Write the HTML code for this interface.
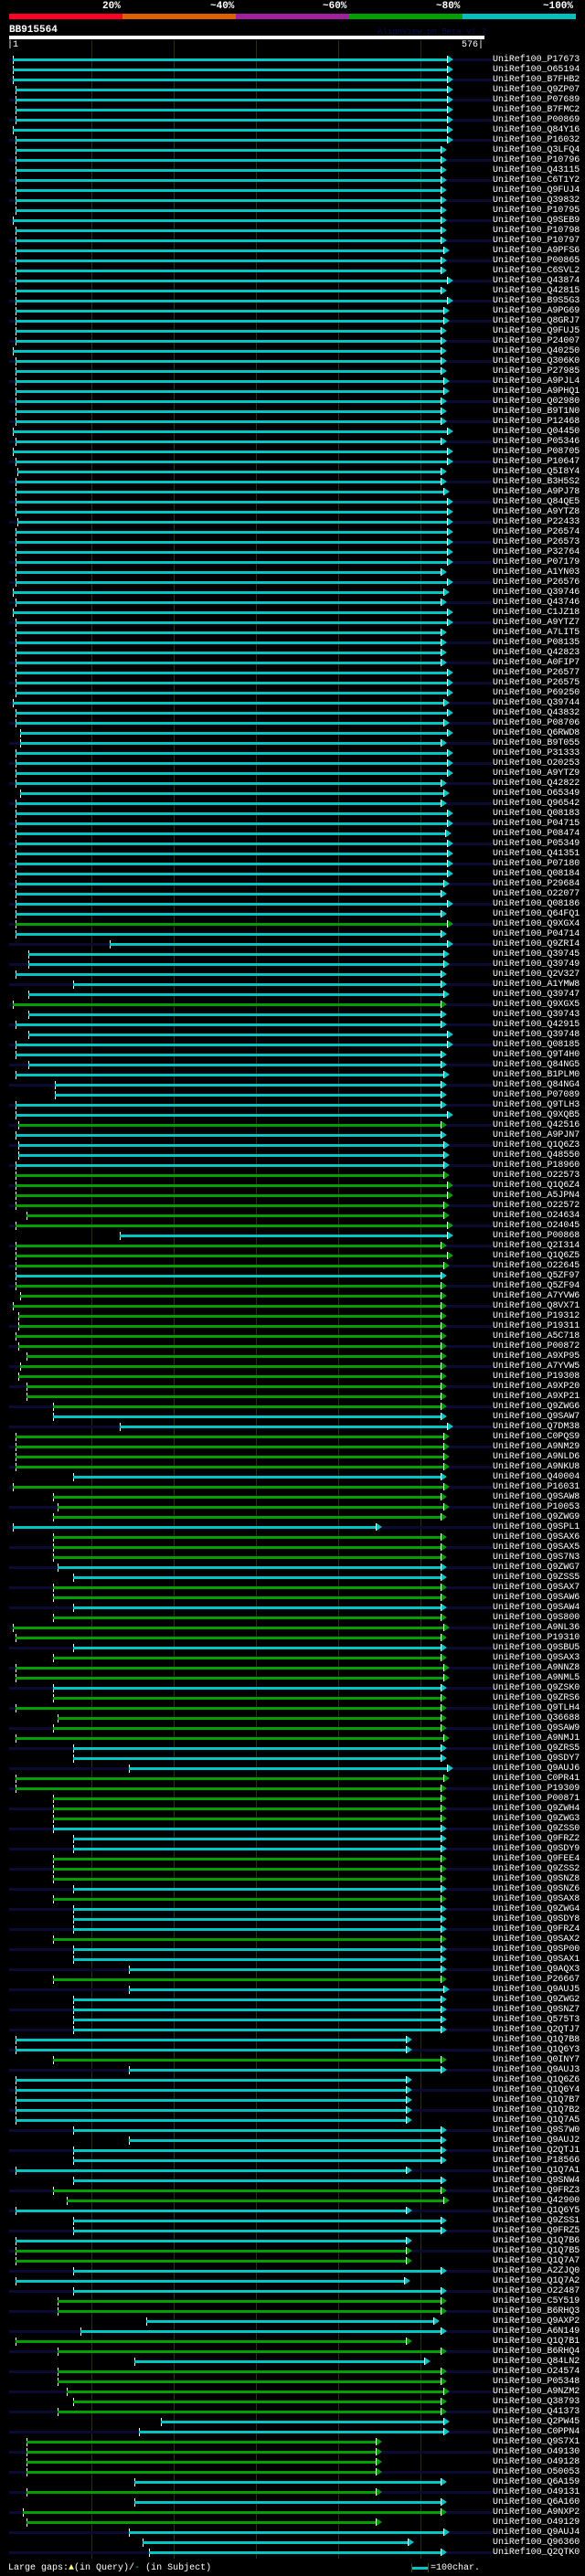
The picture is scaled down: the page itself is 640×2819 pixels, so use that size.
<!DOCTYPE html>
<html><head><meta charset="utf-8"><style>
*{margin:0;padding:0;box-sizing:border-box}
html,body{width:640px;height:2819px;background:#000;overflow:hidden}
body{position:relative;font-family:"Liberation Mono",monospace;color:#fff}
.a{position:absolute}
.pct{top:1px;font:bold 11px/12px "Liberation Mono",monospace}
.grid{position:absolute;top:44px;width:1px;height:2756px;background:#2e2e0c}
.r{position:absolute;left:0;width:640px;height:11px;top:calc(60px + var(--i)*11px);
 --nv:transparent;
 background:linear-gradient(#fff,#fff) no-repeat var(--s) 1px/1px 9px,linear-gradient(var(--nv),var(--nv)) no-repeat 10px 4px/530px 3px}
.r:nth-child(even){}
.n{--nv:#0a0a33}
.c{--c:#00c6c6}.g{--c:#00a000}
.r::before{content:"";position:absolute;left:var(--s);top:4px;height:3px;width:calc(var(--e) - var(--s));background:var(--c)}
.r::after{content:"";position:absolute;left:var(--e);top:1px;width:0;height:0;border-left:6px solid var(--c);border-top:4.5px solid transparent;border-bottom:4.5px solid transparent;box-shadow:-1px 0 0 #fff}
.r b{position:absolute;left:539px;top:0;font:normal 10px/11px "Liberation Mono",monospace;color:#fff;letter-spacing:-0.05px}
</style></head><body>
<div class="a pct" style="left:112px">20%</div>
<div class="a pct" style="left:230px">~40%</div>
<div class="a pct" style="left:353px">~60%</div>
<div class="a pct" style="left:477px">~80%</div>
<div class="a pct" style="left:594px">~100%</div>
<div class="a" style="left:10px;top:15px;width:124px;height:6px;background:#ff0022"></div>
<div class="a" style="left:134px;top:15px;width:124px;height:6px;background:#e06000"></div>
<div class="a" style="left:258px;top:15px;width:124px;height:6px;background:#a020a0"></div>
<div class="a" style="left:382px;top:15px;width:124px;height:6px;background:#00a000"></div>
<div class="a" style="left:506px;top:15px;width:124px;height:6px;background:#00c0c0"></div>
<div class="a" style="left:10px;top:27px;font:bold 11px/12px 'Liberation Mono',monospace">BB915564</div>
<div class="a" style="left:413px;top:31px;font:9px/9px 'Liberation Mono',monospace;color:#0c0c50">AlignView.pm Beta v1.7</div>
<div class="a" style="left:10px;top:39px;width:520px;height:4px;background:#fff"></div>
<div class="a" style="left:8px;top:44px;font:10px/11px 'Liberation Mono',monospace">|1</div>
<div class="a" style="left:505px;top:44px;font:10px/11px 'Liberation Mono',monospace">576|</div>
<div class="grid" style="left:100px"></div><div class="grid" style="left:190px"></div><div class="grid" style="left:280px"></div><div class="grid" style="left:370px"></div><div class="grid" style="left:460px"></div>

<div class="r c n" style="--i:0;--s:14px;--e:490px"><b>UniRef100_P17673</b></div>
<div class="r c" style="--i:1;--s:14px;--e:490px"><b>UniRef100_O65194</b></div>
<div class="r c n" style="--i:2;--s:14px;--e:490px"><b>UniRef100_B7FHB2</b></div>
<div class="r c" style="--i:3;--s:17px;--e:490px"><b>UniRef100_Q9ZP07</b></div>
<div class="r c n" style="--i:4;--s:17px;--e:490px"><b>UniRef100_P07689</b></div>
<div class="r c" style="--i:5;--s:17px;--e:490px"><b>UniRef100_B7FMC2</b></div>
<div class="r c n" style="--i:6;--s:17px;--e:490px"><b>UniRef100_P00869</b></div>
<div class="r c" style="--i:7;--s:14px;--e:490px"><b>UniRef100_Q84Y16</b></div>
<div class="r c n" style="--i:8;--s:17px;--e:490px"><b>UniRef100_P16032</b></div>
<div class="r c" style="--i:9;--s:17px;--e:483px"><b>UniRef100_Q3LFQ4</b></div>
<div class="r c n" style="--i:10;--s:17px;--e:483px"><b>UniRef100_P10796</b></div>
<div class="r c" style="--i:11;--s:17px;--e:483px"><b>UniRef100_Q43115</b></div>
<div class="r c n" style="--i:12;--s:17px;--e:483px"><b>UniRef100_C6T1Y2</b></div>
<div class="r c" style="--i:13;--s:17px;--e:483px"><b>UniRef100_Q9FUJ4</b></div>
<div class="r c n" style="--i:14;--s:17px;--e:483px"><b>UniRef100_Q39832</b></div>
<div class="r c" style="--i:15;--s:17px;--e:483px"><b>UniRef100_P10795</b></div>
<div class="r c n" style="--i:16;--s:14px;--e:483px"><b>UniRef100_Q9SEB9</b></div>
<div class="r c" style="--i:17;--s:17px;--e:483px"><b>UniRef100_P10798</b></div>
<div class="r c n" style="--i:18;--s:17px;--e:483px"><b>UniRef100_P10797</b></div>
<div class="r c" style="--i:19;--s:17px;--e:486px"><b>UniRef100_A9PFS6</b></div>
<div class="r c n" style="--i:20;--s:17px;--e:483px"><b>UniRef100_P00865</b></div>
<div class="r c" style="--i:21;--s:17px;--e:483px"><b>UniRef100_C6SVL2</b></div>
<div class="r c n" style="--i:22;--s:17px;--e:490px"><b>UniRef100_Q43874</b></div>
<div class="r c" style="--i:23;--s:17px;--e:483px"><b>UniRef100_Q42815</b></div>
<div class="r c n" style="--i:24;--s:17px;--e:490px"><b>UniRef100_B9S5G3</b></div>
<div class="r c" style="--i:25;--s:17px;--e:486px"><b>UniRef100_A9PG69</b></div>
<div class="r c n" style="--i:26;--s:17px;--e:486px"><b>UniRef100_Q8GRJ7</b></div>
<div class="r c" style="--i:27;--s:17px;--e:483px"><b>UniRef100_Q9FUJ5</b></div>
<div class="r c n" style="--i:28;--s:17px;--e:483px"><b>UniRef100_P24007</b></div>
<div class="r c" style="--i:29;--s:14px;--e:483px"><b>UniRef100_Q40250</b></div>
<div class="r c n" style="--i:30;--s:17px;--e:483px"><b>UniRef100_Q306K0</b></div>
<div class="r c" style="--i:31;--s:17px;--e:483px"><b>UniRef100_P27985</b></div>
<div class="r c n" style="--i:32;--s:17px;--e:486px"><b>UniRef100_A9PJL4</b></div>
<div class="r c" style="--i:33;--s:17px;--e:486px"><b>UniRef100_A9PHQ1</b></div>
<div class="r c n" style="--i:34;--s:17px;--e:483px"><b>UniRef100_Q02980</b></div>
<div class="r c" style="--i:35;--s:17px;--e:483px"><b>UniRef100_B9T1N0</b></div>
<div class="r c n" style="--i:36;--s:17px;--e:483px"><b>UniRef100_P12468</b></div>
<div class="r c" style="--i:37;--s:14px;--e:490px"><b>UniRef100_Q04450</b></div>
<div class="r c n" style="--i:38;--s:17px;--e:483px"><b>UniRef100_P05346</b></div>
<div class="r c" style="--i:39;--s:14px;--e:490px"><b>UniRef100_P08705</b></div>
<div class="r c n" style="--i:40;--s:17px;--e:490px"><b>UniRef100_P10647</b></div>
<div class="r c" style="--i:41;--s:19px;--e:483px"><b>UniRef100_Q5I8Y4</b></div>
<div class="r c n" style="--i:42;--s:17px;--e:483px"><b>UniRef100_B3H5S2</b></div>
<div class="r c" style="--i:43;--s:17px;--e:486px"><b>UniRef100_A9PJ78</b></div>
<div class="r c n" style="--i:44;--s:17px;--e:490px"><b>UniRef100_Q84QE5</b></div>
<div class="r c" style="--i:45;--s:17px;--e:490px"><b>UniRef100_A9YTZ8</b></div>
<div class="r c n" style="--i:46;--s:19px;--e:490px"><b>UniRef100_P22433</b></div>
<div class="r c" style="--i:47;--s:17px;--e:490px"><b>UniRef100_P26574</b></div>
<div class="r c n" style="--i:48;--s:17px;--e:490px"><b>UniRef100_P26573</b></div>
<div class="r c" style="--i:49;--s:17px;--e:490px"><b>UniRef100_P32764</b></div>
<div class="r c n" style="--i:50;--s:17px;--e:490px"><b>UniRef100_P07179</b></div>
<div class="r c" style="--i:51;--s:17px;--e:483px"><b>UniRef100_A1YN03</b></div>
<div class="r c n" style="--i:52;--s:17px;--e:490px"><b>UniRef100_P26576</b></div>
<div class="r c" style="--i:53;--s:14px;--e:486px"><b>UniRef100_Q39746</b></div>
<div class="r c n" style="--i:54;--s:17px;--e:483px"><b>UniRef100_Q43746</b></div>
<div class="r c" style="--i:55;--s:14px;--e:490px"><b>UniRef100_C1JZ18</b></div>
<div class="r c n" style="--i:56;--s:17px;--e:490px"><b>UniRef100_A9YTZ7</b></div>
<div class="r c" style="--i:57;--s:17px;--e:483px"><b>UniRef100_A7LIT5</b></div>
<div class="r c n" style="--i:58;--s:17px;--e:483px"><b>UniRef100_P08135</b></div>
<div class="r c" style="--i:59;--s:17px;--e:483px"><b>UniRef100_Q42823</b></div>
<div class="r c n" style="--i:60;--s:17px;--e:483px"><b>UniRef100_A0FIP7</b></div>
<div class="r c" style="--i:61;--s:17px;--e:490px"><b>UniRef100_P26577</b></div>
<div class="r c n" style="--i:62;--s:17px;--e:490px"><b>UniRef100_P26575</b></div>
<div class="r c" style="--i:63;--s:17px;--e:490px"><b>UniRef100_P69250</b></div>
<div class="r c n" style="--i:64;--s:14px;--e:486px"><b>UniRef100_Q39744</b></div>
<div class="r c" style="--i:65;--s:17px;--e:490px"><b>UniRef100_Q43832</b></div>
<div class="r c n" style="--i:66;--s:17px;--e:486px"><b>UniRef100_P08706</b></div>
<div class="r c" style="--i:67;--s:22px;--e:490px"><b>UniRef100_Q6RWD8</b></div>
<div class="r c n" style="--i:68;--s:22px;--e:483px"><b>UniRef100_B9T055</b></div>
<div class="r c" style="--i:69;--s:17px;--e:490px"><b>UniRef100_P31333</b></div>
<div class="r c n" style="--i:70;--s:17px;--e:490px"><b>UniRef100_O20253</b></div>
<div class="r c" style="--i:71;--s:17px;--e:490px"><b>UniRef100_A9YTZ9</b></div>
<div class="r c n" style="--i:72;--s:17px;--e:483px"><b>UniRef100_Q42822</b></div>
<div class="r c" style="--i:73;--s:22px;--e:486px"><b>UniRef100_O65349</b></div>
<div class="r c n" style="--i:74;--s:17px;--e:483px"><b>UniRef100_Q96542</b></div>
<div class="r c" style="--i:75;--s:17px;--e:490px"><b>UniRef100_Q08183</b></div>
<div class="r c n" style="--i:76;--s:17px;--e:490px"><b>UniRef100_P04715</b></div>
<div class="r c" style="--i:77;--s:17px;--e:488px"><b>UniRef100_P08474</b></div>
<div class="r c n" style="--i:78;--s:17px;--e:490px"><b>UniRef100_P05349</b></div>
<div class="r c" style="--i:79;--s:17px;--e:490px"><b>UniRef100_Q41351</b></div>
<div class="r c n" style="--i:80;--s:17px;--e:490px"><b>UniRef100_P07180</b></div>
<div class="r c" style="--i:81;--s:17px;--e:490px"><b>UniRef100_Q08184</b></div>
<div class="r c n" style="--i:82;--s:17px;--e:486px"><b>UniRef100_P29684</b></div>
<div class="r c" style="--i:83;--s:17px;--e:483px"><b>UniRef100_O22077</b></div>
<div class="r c n" style="--i:84;--s:17px;--e:490px"><b>UniRef100_Q08186</b></div>
<div class="r c" style="--i:85;--s:17px;--e:483px"><b>UniRef100_Q64FQ1</b></div>
<div class="r g n" style="--i:86;--s:17px;--e:490px"><b>UniRef100_Q9XGX4</b></div>
<div class="r c" style="--i:87;--s:17px;--e:483px"><b>UniRef100_P04714</b></div>
<div class="r c n" style="--i:88;--s:120px;--e:490px"><b>UniRef100_Q9ZRI4</b></div>
<div class="r c" style="--i:89;--s:31px;--e:486px"><b>UniRef100_Q39745</b></div>
<div class="r c n" style="--i:90;--s:31px;--e:486px"><b>UniRef100_Q39749</b></div>
<div class="r c" style="--i:91;--s:17px;--e:483px"><b>UniRef100_Q2V327</b></div>
<div class="r c n" style="--i:92;--s:80px;--e:483px"><b>UniRef100_A1YMW8</b></div>
<div class="r c" style="--i:93;--s:31px;--e:486px"><b>UniRef100_Q39747</b></div>
<div class="r g n" style="--i:94;--s:14px;--e:483px"><b>UniRef100_Q9XGX5</b></div>
<div class="r c" style="--i:95;--s:31px;--e:483px"><b>UniRef100_Q39743</b></div>
<div class="r c n" style="--i:96;--s:17px;--e:483px"><b>UniRef100_Q42915</b></div>
<div class="r c" style="--i:97;--s:31px;--e:490px"><b>UniRef100_Q39748</b></div>
<div class="r c n" style="--i:98;--s:17px;--e:490px"><b>UniRef100_Q08185</b></div>
<div class="r c" style="--i:99;--s:17px;--e:483px"><b>UniRef100_Q9T4H0</b></div>
<div class="r c n" style="--i:100;--s:31px;--e:483px"><b>UniRef100_Q84NG5</b></div>
<div class="r c" style="--i:101;--s:17px;--e:486px"><b>UniRef100_B1PLM0</b></div>
<div class="r c n" style="--i:102;--s:60px;--e:483px"><b>UniRef100_Q84NG4</b></div>
<div class="r c" style="--i:103;--s:60px;--e:483px"><b>UniRef100_P07089</b></div>
<div class="r c n" style="--i:104;--s:17px;--e:483px"><b>UniRef100_Q9TLH3</b></div>
<div class="r c" style="--i:105;--s:17px;--e:490px"><b>UniRef100_Q9XQB5</b></div>
<div class="r g n" style="--i:106;--s:20px;--e:483px"><b>UniRef100_Q42516</b></div>
<div class="r c" style="--i:107;--s:17px;--e:483px"><b>UniRef100_A9PJN7</b></div>
<div class="r c n" style="--i:108;--s:20px;--e:486px"><b>UniRef100_Q1Q6Z3</b></div>
<div class="r c" style="--i:109;--s:20px;--e:486px"><b>UniRef100_Q48550</b></div>
<div class="r c n" style="--i:110;--s:17px;--e:486px"><b>UniRef100_P18960</b></div>
<div class="r g" style="--i:111;--s:17px;--e:486px"><b>UniRef100_O22573</b></div>
<div class="r g n" style="--i:112;--s:17px;--e:490px"><b>UniRef100_Q1Q6Z4</b></div>
<div class="r g" style="--i:113;--s:17px;--e:490px"><b>UniRef100_A5JPN4</b></div>
<div class="r g n" style="--i:114;--s:17px;--e:486px"><b>UniRef100_O22572</b></div>
<div class="r g" style="--i:115;--s:29px;--e:486px"><b>UniRef100_O24634</b></div>
<div class="r g n" style="--i:116;--s:17px;--e:490px"><b>UniRef100_O24045</b></div>
<div class="r c" style="--i:117;--s:131px;--e:490px"><b>UniRef100_P00868</b></div>
<div class="r g n" style="--i:118;--s:17px;--e:483px"><b>UniRef100_Q2I314</b></div>
<div class="r g" style="--i:119;--s:17px;--e:490px"><b>UniRef100_Q1Q6Z5</b></div>
<div class="r g n" style="--i:120;--s:17px;--e:486px"><b>UniRef100_O22645</b></div>
<div class="r c" style="--i:121;--s:17px;--e:483px"><b>UniRef100_Q5ZF97</b></div>
<div class="r g n" style="--i:122;--s:17px;--e:483px"><b>UniRef100_Q5ZF94</b></div>
<div class="r g" style="--i:123;--s:22px;--e:483px"><b>UniRef100_A7YVW6</b></div>
<div class="r g n" style="--i:124;--s:14px;--e:483px"><b>UniRef100_Q8VX71</b></div>
<div class="r g" style="--i:125;--s:20px;--e:483px"><b>UniRef100_P19312</b></div>
<div class="r g n" style="--i:126;--s:20px;--e:483px"><b>UniRef100_P19311</b></div>
<div class="r g" style="--i:127;--s:17px;--e:483px"><b>UniRef100_A5C718</b></div>
<div class="r g n" style="--i:128;--s:20px;--e:483px"><b>UniRef100_P00872</b></div>
<div class="r g" style="--i:129;--s:29px;--e:483px"><b>UniRef100_A9XP95</b></div>
<div class="r g n" style="--i:130;--s:22px;--e:483px"><b>UniRef100_A7YVW5</b></div>
<div class="r g" style="--i:131;--s:20px;--e:483px"><b>UniRef100_P19308</b></div>
<div class="r g n" style="--i:132;--s:29px;--e:483px"><b>UniRef100_A9XP20</b></div>
<div class="r g" style="--i:133;--s:29px;--e:483px"><b>UniRef100_A9XP21</b></div>
<div class="r g n" style="--i:134;--s:58px;--e:483px"><b>UniRef100_Q9ZWG6</b></div>
<div class="r c" style="--i:135;--s:58px;--e:483px"><b>UniRef100_Q9SAW7</b></div>
<div class="r c n" style="--i:136;--s:131px;--e:490px"><b>UniRef100_Q7DM38</b></div>
<div class="r g" style="--i:137;--s:17px;--e:486px"><b>UniRef100_C0PQS9</b></div>
<div class="r g n" style="--i:138;--s:17px;--e:486px"><b>UniRef100_A9NM29</b></div>
<div class="r g" style="--i:139;--s:17px;--e:486px"><b>UniRef100_A9NLD6</b></div>
<div class="r g n" style="--i:140;--s:17px;--e:486px"><b>UniRef100_A9NKU8</b></div>
<div class="r c" style="--i:141;--s:80px;--e:483px"><b>UniRef100_Q40004</b></div>
<div class="r g n" style="--i:142;--s:14px;--e:486px"><b>UniRef100_P16031</b></div>
<div class="r g" style="--i:143;--s:58px;--e:483px"><b>UniRef100_Q9SAW8</b></div>
<div class="r g n" style="--i:144;--s:63px;--e:486px"><b>UniRef100_P10053</b></div>
<div class="r g" style="--i:145;--s:58px;--e:483px"><b>UniRef100_Q9ZWG9</b></div>
<div class="r c n" style="--i:146;--s:14px;--e:412px"><b>UniRef100_Q9SPL1</b></div>
<div class="r g" style="--i:147;--s:58px;--e:483px"><b>UniRef100_Q9SAX6</b></div>
<div class="r g n" style="--i:148;--s:58px;--e:483px"><b>UniRef100_Q9SAX5</b></div>
<div class="r g" style="--i:149;--s:58px;--e:483px"><b>UniRef100_Q9S7N3</b></div>
<div class="r c n" style="--i:150;--s:63px;--e:483px"><b>UniRef100_Q9ZWG7</b></div>
<div class="r c" style="--i:151;--s:80px;--e:483px"><b>UniRef100_Q9ZSS5</b></div>
<div class="r g n" style="--i:152;--s:58px;--e:483px"><b>UniRef100_Q9SAX7</b></div>
<div class="r g" style="--i:153;--s:58px;--e:483px"><b>UniRef100_Q9SAW6</b></div>
<div class="r c n" style="--i:154;--s:80px;--e:483px"><b>UniRef100_Q9SAW4</b></div>
<div class="r g" style="--i:155;--s:58px;--e:483px"><b>UniRef100_Q9S800</b></div>
<div class="r g n" style="--i:156;--s:14px;--e:486px"><b>UniRef100_A9NL36</b></div>
<div class="r g" style="--i:157;--s:17px;--e:483px"><b>UniRef100_P19310</b></div>
<div class="r c n" style="--i:158;--s:80px;--e:483px"><b>UniRef100_Q9SBU5</b></div>
<div class="r g" style="--i:159;--s:58px;--e:483px"><b>UniRef100_Q9SAX3</b></div>
<div class="r g n" style="--i:160;--s:17px;--e:486px"><b>UniRef100_A9NNZ8</b></div>
<div class="r g" style="--i:161;--s:17px;--e:486px"><b>UniRef100_A9NML5</b></div>
<div class="r c n" style="--i:162;--s:58px;--e:483px"><b>UniRef100_Q9ZSK0</b></div>
<div class="r g" style="--i:163;--s:58px;--e:483px"><b>UniRef100_Q9ZRS6</b></div>
<div class="r g n" style="--i:164;--s:17px;--e:483px"><b>UniRef100_Q9TLH4</b></div>
<div class="r g" style="--i:165;--s:63px;--e:483px"><b>UniRef100_Q36688</b></div>
<div class="r g n" style="--i:166;--s:58px;--e:483px"><b>UniRef100_Q9SAW9</b></div>
<div class="r g" style="--i:167;--s:17px;--e:486px"><b>UniRef100_A9NMJ1</b></div>
<div class="r c n" style="--i:168;--s:80px;--e:483px"><b>UniRef100_Q9ZRS5</b></div>
<div class="r c" style="--i:169;--s:80px;--e:483px"><b>UniRef100_Q9SDY7</b></div>
<div class="r c n" style="--i:170;--s:141px;--e:490px"><b>UniRef100_Q9AUJ6</b></div>
<div class="r g" style="--i:171;--s:17px;--e:486px"><b>UniRef100_C0PR41</b></div>
<div class="r g n" style="--i:172;--s:17px;--e:483px"><b>UniRef100_P19309</b></div>
<div class="r g" style="--i:173;--s:58px;--e:483px"><b>UniRef100_P00871</b></div>
<div class="r g n" style="--i:174;--s:58px;--e:483px"><b>UniRef100_Q9ZWH4</b></div>
<div class="r g" style="--i:175;--s:58px;--e:483px"><b>UniRef100_Q9ZWG3</b></div>
<div class="r c n" style="--i:176;--s:58px;--e:483px"><b>UniRef100_Q9ZSS0</b></div>
<div class="r c" style="--i:177;--s:80px;--e:483px"><b>UniRef100_Q9FRZ2</b></div>
<div class="r c n" style="--i:178;--s:80px;--e:483px"><b>UniRef100_Q9SDY9</b></div>
<div class="r g" style="--i:179;--s:58px;--e:483px"><b>UniRef100_Q9FEE4</b></div>
<div class="r g n" style="--i:180;--s:58px;--e:483px"><b>UniRef100_Q9ZSS2</b></div>
<div class="r g" style="--i:181;--s:58px;--e:483px"><b>UniRef100_Q9SNZ8</b></div>
<div class="r c n" style="--i:182;--s:80px;--e:483px"><b>UniRef100_Q9SNZ6</b></div>
<div class="r g" style="--i:183;--s:58px;--e:483px"><b>UniRef100_Q9SAX8</b></div>
<div class="r c n" style="--i:184;--s:80px;--e:483px"><b>UniRef100_Q9ZWG4</b></div>
<div class="r c" style="--i:185;--s:80px;--e:483px"><b>UniRef100_Q9SDY8</b></div>
<div class="r c n" style="--i:186;--s:80px;--e:483px"><b>UniRef100_Q9FRZ4</b></div>
<div class="r g" style="--i:187;--s:58px;--e:483px"><b>UniRef100_Q9SAX2</b></div>
<div class="r c n" style="--i:188;--s:80px;--e:483px"><b>UniRef100_Q9SP00</b></div>
<div class="r c" style="--i:189;--s:80px;--e:483px"><b>UniRef100_Q9SAX1</b></div>
<div class="r c n" style="--i:190;--s:141px;--e:483px"><b>UniRef100_Q9AQX3</b></div>
<div class="r g" style="--i:191;--s:58px;--e:483px"><b>UniRef100_P26667</b></div>
<div class="r c n" style="--i:192;--s:141px;--e:486px"><b>UniRef100_Q9AUJ5</b></div>
<div class="r c" style="--i:193;--s:80px;--e:483px"><b>UniRef100_Q9ZWG2</b></div>
<div class="r c n" style="--i:194;--s:80px;--e:483px"><b>UniRef100_Q9SNZ7</b></div>
<div class="r c" style="--i:195;--s:80px;--e:483px"><b>UniRef100_Q575T3</b></div>
<div class="r c n" style="--i:196;--s:80px;--e:483px"><b>UniRef100_Q2QTJ7</b></div>
<div class="r c" style="--i:197;--s:17px;--e:445px"><b>UniRef100_Q1Q7B8</b></div>
<div class="r c n" style="--i:198;--s:17px;--e:445px"><b>UniRef100_Q1Q6Y3</b></div>
<div class="r g" style="--i:199;--s:58px;--e:483px"><b>UniRef100_Q0INY7</b></div>
<div class="r c n" style="--i:200;--s:141px;--e:483px"><b>UniRef100_Q9AUJ3</b></div>
<div class="r c" style="--i:201;--s:17px;--e:445px"><b>UniRef100_Q1Q6Z6</b></div>
<div class="r c n" style="--i:202;--s:17px;--e:445px"><b>UniRef100_Q1Q6Y4</b></div>
<div class="r c" style="--i:203;--s:17px;--e:445px"><b>UniRef100_Q1Q7B7</b></div>
<div class="r c n" style="--i:204;--s:17px;--e:445px"><b>UniRef100_Q1Q7B2</b></div>
<div class="r c" style="--i:205;--s:17px;--e:445px"><b>UniRef100_Q1Q7A5</b></div>
<div class="r c n" style="--i:206;--s:80px;--e:483px"><b>UniRef100_Q9S7W0</b></div>
<div class="r c" style="--i:207;--s:141px;--e:483px"><b>UniRef100_Q9AUJ2</b></div>
<div class="r c n" style="--i:208;--s:80px;--e:483px"><b>UniRef100_Q2QTJ1</b></div>
<div class="r c" style="--i:209;--s:80px;--e:483px"><b>UniRef100_P18566</b></div>
<div class="r c n" style="--i:210;--s:17px;--e:445px"><b>UniRef100_Q1Q7A1</b></div>
<div class="r c" style="--i:211;--s:80px;--e:483px"><b>UniRef100_Q9SNW4</b></div>
<div class="r g n" style="--i:212;--s:58px;--e:483px"><b>UniRef100_Q9FRZ3</b></div>
<div class="r g" style="--i:213;--s:73px;--e:486px"><b>UniRef100_Q42900</b></div>
<div class="r c n" style="--i:214;--s:17px;--e:445px"><b>UniRef100_Q1Q6Y5</b></div>
<div class="r c" style="--i:215;--s:80px;--e:483px"><b>UniRef100_Q9ZSS1</b></div>
<div class="r c n" style="--i:216;--s:80px;--e:483px"><b>UniRef100_Q9FRZ5</b></div>
<div class="r c" style="--i:217;--s:17px;--e:445px"><b>UniRef100_Q1Q7B6</b></div>
<div class="r g n" style="--i:218;--s:17px;--e:445px"><b>UniRef100_Q1Q7B5</b></div>
<div class="r g" style="--i:219;--s:17px;--e:445px"><b>UniRef100_Q1Q7A7</b></div>
<div class="r c n" style="--i:220;--s:80px;--e:483px"><b>UniRef100_A2ZJQ0</b></div>
<div class="r c" style="--i:221;--s:17px;--e:443px"><b>UniRef100_Q1Q7A2</b></div>
<div class="r c n" style="--i:222;--s:80px;--e:483px"><b>UniRef100_O22487</b></div>
<div class="r g" style="--i:223;--s:63px;--e:483px"><b>UniRef100_C5Y519</b></div>
<div class="r g n" style="--i:224;--s:63px;--e:483px"><b>UniRef100_B6RHQ3</b></div>
<div class="r c" style="--i:225;--s:160px;--e:475px"><b>UniRef100_Q9AXP2</b></div>
<div class="r c n" style="--i:226;--s:88px;--e:483px"><b>UniRef100_A6N149</b></div>
<div class="r g" style="--i:227;--s:17px;--e:445px"><b>UniRef100_Q1Q7B1</b></div>
<div class="r g n" style="--i:228;--s:63px;--e:483px"><b>UniRef100_B6RHQ4</b></div>
<div class="r c" style="--i:229;--s:147px;--e:465px"><b>UniRef100_Q84LN2</b></div>
<div class="r g n" style="--i:230;--s:63px;--e:483px"><b>UniRef100_O24574</b></div>
<div class="r g" style="--i:231;--s:63px;--e:483px"><b>UniRef100_P05348</b></div>
<div class="r g n" style="--i:232;--s:73px;--e:486px"><b>UniRef100_A9NZM2</b></div>
<div class="r g" style="--i:233;--s:80px;--e:483px"><b>UniRef100_Q38793</b></div>
<div class="r g n" style="--i:234;--s:63px;--e:483px"><b>UniRef100_Q41373</b></div>
<div class="r c" style="--i:235;--s:176px;--e:486px"><b>UniRef100_Q2PW45</b></div>
<div class="r c n" style="--i:236;--s:152px;--e:486px"><b>UniRef100_C0PPN4</b></div>
<div class="r g" style="--i:237;--s:29px;--e:412px"><b>UniRef100_Q9S7X1</b></div>
<div class="r g n" style="--i:238;--s:29px;--e:412px"><b>UniRef100_O49130</b></div>
<div class="r g" style="--i:239;--s:29px;--e:412px"><b>UniRef100_O49128</b></div>
<div class="r g n" style="--i:240;--s:29px;--e:412px"><b>UniRef100_O50053</b></div>
<div class="r c" style="--i:241;--s:147px;--e:483px"><b>UniRef100_Q6A159</b></div>
<div class="r g n" style="--i:242;--s:29px;--e:412px"><b>UniRef100_O49131</b></div>
<div class="r c" style="--i:243;--s:147px;--e:483px"><b>UniRef100_Q6A160</b></div>
<div class="r g n" style="--i:244;--s:25px;--e:483px"><b>UniRef100_A9NXP2</b></div>
<div class="r g" style="--i:245;--s:29px;--e:412px"><b>UniRef100_O49129</b></div>
<div class="r c n" style="--i:246;--s:141px;--e:486px"><b>UniRef100_Q9AUJ4</b></div>
<div class="r c" style="--i:247;--s:156px;--e:447px"><b>UniRef100_Q96360</b></div>
<div class="r c n" style="--i:248;--s:163px;--e:483px"><b>UniRef100_Q2QTK0</b></div>

<div class="a" style="left:9px;top:2805px;font:10px/11px 'Liberation Mono',monospace">Large gaps:<span style="color:#ffff80">&#9650;</span>(in Query)/<span style="color:#00c6c6">-</span> (in Subject)</div>
<div class="a" style="left:450px;top:2805px;width:1px;height:10px;background:#4a4a10"></div>
<div class="a" style="left:451px;top:2809px;width:17px;height:3px;background:#00c6c6"></div>
<div class="a" style="left:468px;top:2805px;width:1px;height:10px;background:#4a4a10"></div>
<div class="a" style="left:471px;top:2805px;font:10px/11px 'Liberation Mono',monospace">=100char.</div>
</body></html>
